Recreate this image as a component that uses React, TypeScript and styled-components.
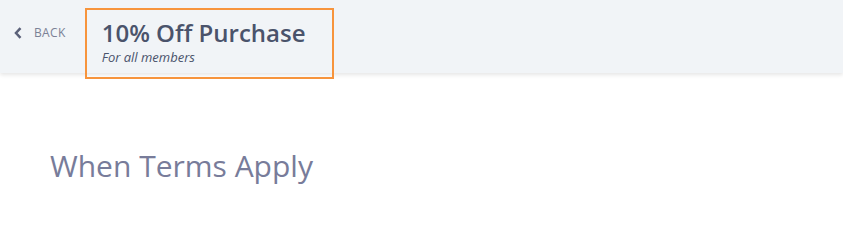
import React from 'react'
import styled, { createGlobalStyle } from 'styled-components'

const GlobalStyle = createGlobalStyle`
  html, body {
    margin: 0;
    padding: 0;
    background: #ffffff;
    font-family: 'Open Sans', 'Noto Sans', sans-serif;
  }
`

const Header = styled.header`
  display: flex;
  align-items: flex-start;
  height: 73px;
  background: #f1f4f7;
  box-shadow: 0 2px 4px rgba(0, 0, 0, 0.1);
  position: relative;
  z-index: 1;
`

const BackLink = styled.a`
  display: flex;
  align-items: center;
  gap: 12px;
  margin: 24px 0 0 14px;
  color: #7b8196;
  font-size: 12px;
  letter-spacing: 0.03em;
  text-decoration: none;
  text-transform: uppercase;
  cursor: pointer;
`

const TitleBox = styled.div`
  display: flex;
  flex-direction: column;
  box-sizing: border-box;
  width: 249px;
  height: 71px;
  margin: 8px 0 0 19px;
  padding: 7px 0 0 15px;
  border: 2px solid #f7943c;
`

const Title = styled.h1`
  margin: 0;
  font-size: 24px;
  font-weight: 600;
  line-height: 32px;
  color: #4a536b;
`

const Subtitle = styled.span`
  font-size: 13px;
  font-style: italic;
  line-height: 16px;
  color: #4a536b;
`

const Main = styled.main`
  padding: 72px 0 0 50px;
`

const SectionTitle = styled.h2`
  margin: 0;
  font-size: 30px;
  font-weight: 400;
  line-height: 42px;
  color: #787c9a;
`

const Chevron = () => (
  <svg width="8" height="12" viewBox="0 0 8 12">
    <path d="M6.5 1.2 L2 6 L6.5 10.8" fill="none" stroke="#5b6179" strokeWidth="2.5" />
  </svg>
)

export default function App() {
  return (
    <>
      <GlobalStyle />
      <Header>
        <BackLink>
          <Chevron />
          Back
        </BackLink>
        <TitleBox>
          <Title>10% Off Purchase</Title>
          <Subtitle>For all members</Subtitle>
        </TitleBox>
      </Header>
      <Main>
        <SectionTitle>When Terms Apply</SectionTitle>
      </Main>
    </>
  )
}
